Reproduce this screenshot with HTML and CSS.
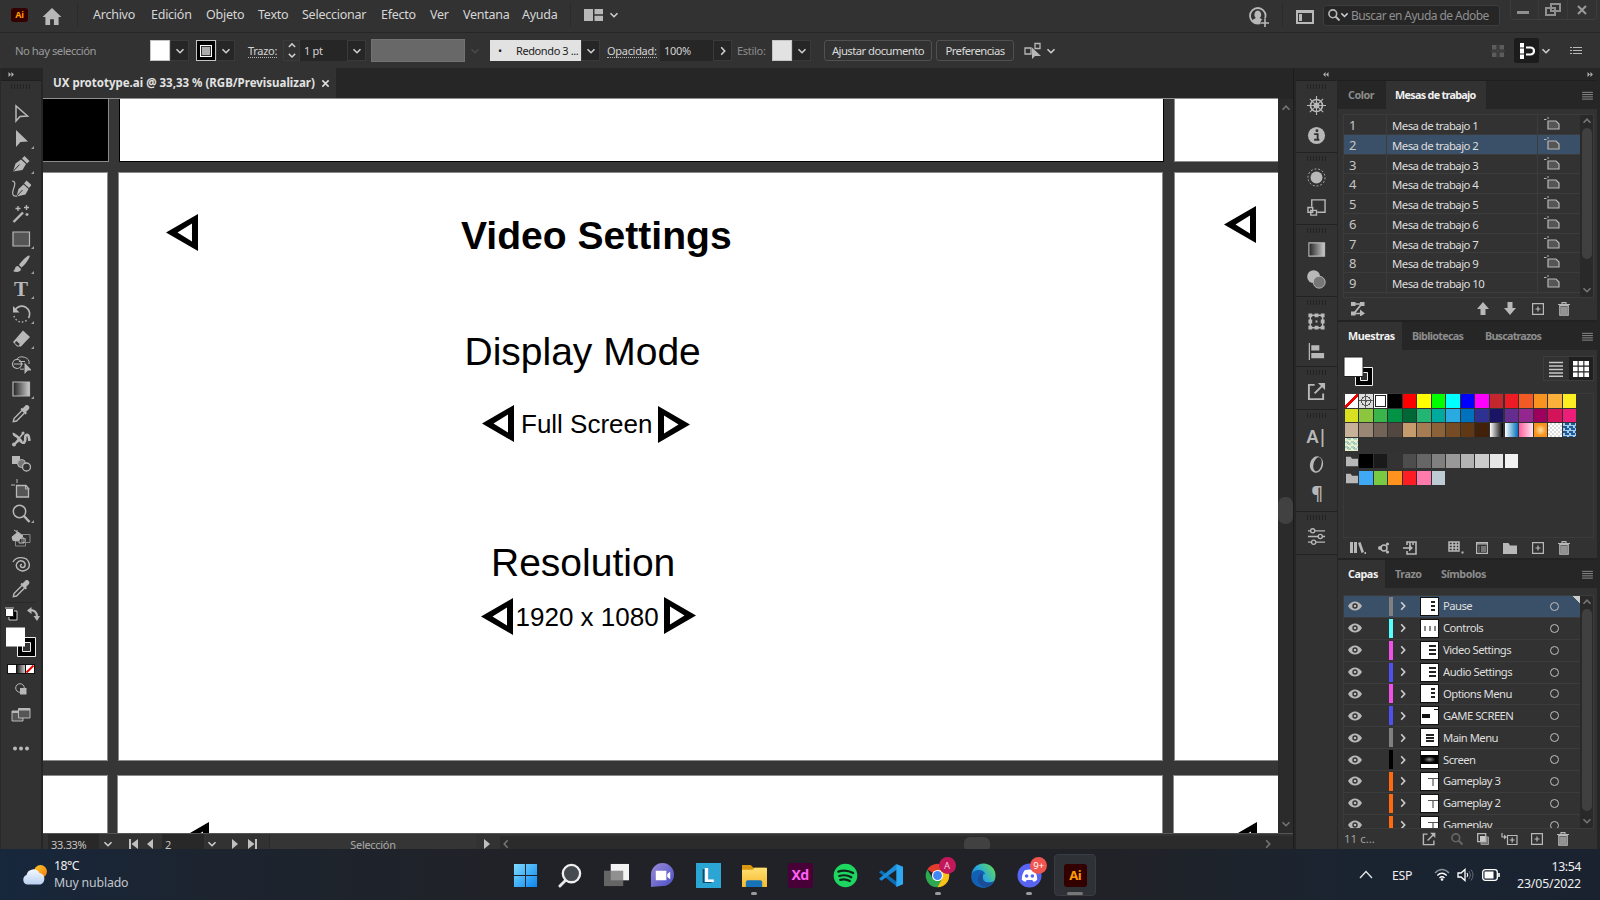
FILE: index.html
```html
<!DOCTYPE html>
<html lang="es">
<head>
<meta charset="utf-8">
<title>UX prototype.ai</title>
<link rel="stylesheet" href="styles.css">
</head>
<body>
<svg class="sprite" aria-hidden="true">
  <defs>
    <linearGradient id="g-gray"><stop offset="0" stop-color="#222"/><stop offset="1" stop-color="#ccc"/></linearGradient>
    <linearGradient id="g-win" x2="1" y2="1"><stop offset="0" stop-color="#7fdcff"/><stop offset="1" stop-color="#0a86f0"/></linearGradient>
    <linearGradient id="g-cloud" y2="1" x2="0"><stop offset="0" stop-color="#f4f8ff"/><stop offset="1" stop-color="#b9d0f0"/></linearGradient>
    <linearGradient id="g-sun" y2="1" x2="1"><stop offset="0" stop-color="#ffc928"/><stop offset="1" stop-color="#f07a10"/></linearGradient>
    <linearGradient id="g-chat" y2="1" x2="1"><stop offset="0" stop-color="#9b8bd8"/><stop offset="1" stop-color="#4a4fc4"/></linearGradient>
    <linearGradient id="g-fold" y2="1" x2="0"><stop offset="0" stop-color="#ffe072"/><stop offset="1" stop-color="#f5b92e"/></linearGradient>
    <linearGradient id="g-edge" x1="0" y1="0.9" x2="1" y2="0.2"><stop offset="0" stop-color="#0c59a4"/><stop offset="0.5" stop-color="#2aa8dc"/><stop offset="1" stop-color="#5fd95a"/></linearGradient>
  </defs>
  <symbol id="down" viewBox="0 0 10 10"><path d="M1.5 3.2 5 6.7 8.5 3.2" fill="none" stroke="currentColor" stroke-width="1.6"/></symbol>
  <symbol id="up" viewBox="0 0 10 10"><path d="M1.5 6.7 5 3.2 8.5 6.7" fill="none" stroke="currentColor" stroke-width="1.6"/></symbol>
  <symbol id="right" viewBox="0 0 10 10"><path d="M3.2 1.2 6.7 5 3.2 8.8" fill="none" stroke="currentColor" stroke-width="1.6"/></symbol>
  <symbol id="left" viewBox="0 0 10 10"><path d="M6.7 1.2 3.2 5 6.7 8.8" fill="none" stroke="currentColor" stroke-width="1.6"/></symbol>
  <symbol id="expand" viewBox="0 0 8 6"><path d="M1 0v6l3-3zM4.500 0v6l3-3z" fill="currentColor"/></symbol>
  <symbol id="collapse" viewBox="0 0 8 6"><path d="M3.500 0v6l-3-3zM7 0v6L4 3z" fill="currentColor"/></symbol>
  <symbol id="menu" viewBox="0 0 12 10"><path d="M0 1.500h12M0 4h12M0 6.500h12M0 9h12" stroke="currentColor" stroke-width="1.100"/></symbol>
  <symbol id="home" viewBox="0 0 20 18"><path d="M10 0 0 9.500h3V18h5v-6h4v6h5V9.500h3z" fill="currentColor"/></symbol>
  <symbol id="workspace" viewBox="0 0 19 12"><path d="M0 0h9v12H0zM10.500 0H19v5.300h-8.500zM10.500 6.700H19V12h-8.500z" fill="currentColor"/></symbol>
  <symbol id="user" viewBox="0 0 20 20"><circle cx="8.800" cy="8.800" r="7.800" fill="none" stroke="currentColor" stroke-width="1.800"/><path d="M8.800 3.500a3.600 4.200 0 0 1 2 7.600l3.500 2-1 2.400-4.500 1.500-4.500-1.500-1-2.400 3.500-2a3.600 4.200 0 0 1 2-7.600z" fill="currentColor"/><circle cx="16" cy="16" r="4.500" fill="#323232"/><path d="M16 12v8M12 16h8" stroke="currentColor" stroke-width="1.600"/></symbol>
  <symbol id="panel" viewBox="0 0 18 14"><path d="M1 1h16v12H1zM1 2h16" fill="none" stroke="currentColor" stroke-width="2"/><path d="M3 4h3v7H3z" fill="currentColor"/></symbol>
  <symbol id="search" viewBox="0 0 12 12"><circle cx="4.800" cy="4.800" r="3.900" fill="none" stroke="currentColor" stroke-width="1.600"/><path d="m7.500 7.500 4 4" stroke="currentColor" stroke-width="2"/></symbol>
  <symbol id="restore" viewBox="0 0 16 14"><path d="M6 1h9v7H6zM1 5h9v7H1z" fill="#323232" stroke="currentColor" stroke-width="2"/></symbol>
  <symbol id="selsim" viewBox="0 0 18 17"><path d="M1 6h6v6H1zM11 1.500h5v5h-5z" fill="none" stroke="currentColor" stroke-width="1.300"/><path d="M8 5.500V17l3-3h6z" fill="currentColor"/></symbol>
  <symbol id="gridsnap" viewBox="0 0 14 14"><path d="M1 1h4.500v4.500H1zM8.500 1H13v4.500H8.500zM1 8.500h4.500V13H1zM8.500 8.500H13V13H8.500z" fill="currentColor"/><path d="M7 0v14M0 7h14" stroke="currentColor" stroke-width=".5"/></symbol>
  <symbol id="magnet" viewBox="0 0 16 16"><path d="M1 0h4v4.500H1zM1 5.500h4v5H1zM1 11.500h4V16H1z" fill="#fff"/><path d="M7 4.500h4.500a3.300 3.300 0 0 1 0 7H7" fill="none" stroke="#fff" stroke-width="2.200"/></symbol>
  <symbol id="listico" viewBox="0 0 12 9"><path d="M3 1.500h9M3 4.500h9M3 7.500h9M0 1.500h2M0 4.500h2M0 7.500h2" stroke="currentColor" stroke-width="1.200"/></symbol>

  <symbol id="t-sel" viewBox="0 0 20 20"><path d="M5 2v15l4-4.600 7.500-.4z" fill="none" stroke="currentColor" stroke-width="1.500"/></symbol>
  <symbol id="t-dsel" viewBox="0 0 20 20"><path d="M5 1v17l4.500-5 7.500-.5z" fill="currentColor"/></symbol>
  <symbol id="t-pen" viewBox="0 0 20 20"><path d="m2 17.500 2.500-8 5.500-4 5 4.500-3.500 6z" fill="currentColor"/><path d="m2 17.500 6.500-7" stroke="#323232"/><path d="m11 4.500 2.500-2.500 5 5L16 9.500z" fill="currentColor"/></symbol>
  <symbol id="t-curv" viewBox="0 0 20 20"><path d="m5.500 17.500 2-7.500 5-4.500 5 4.500-3 5.500z" fill="currentColor"/><path d="m5.500 17.500 6-6.500" stroke="#323232"/><path d="m13 4.500 2.500-3 5 4.500-2.500 3z" fill="currentColor"/><path d="M1 2c4 0 3 4 1.500 8S1 18 6 17" fill="none" stroke="currentColor" stroke-width="1.200"/></symbol>
  <symbol id="t-wand" viewBox="0 0 20 20"><path d="m2.500 18 9.500-9.500" stroke="currentColor" stroke-width="2.400"/><path d="M7 2v5M4.500 4.500h5M15.500 1v5M13 3.500h5M16 9v3M14.500 10.500h3" stroke="currentColor" stroke-width="1.300"/></symbol>
  <symbol id="t-rect" viewBox="0 0 20 20"><path d="M2 3h16.500v14H2z" fill="#555" stroke="currentColor" stroke-width="1.200"/></symbol>
  <symbol id="t-brush" viewBox="0 0 20 20"><path d="M18.500 1.500C16 1 9 9 8 11l2.500 2.500C13 12 20 3 18.500 1.500zM7 12c-4 0-2 4-5 5 3 2 8 1 8-2z" fill="currentColor"/></symbol>
  <symbol id="t-rot" viewBox="0 0 20 20"><path d="M4 6a7.500 7.500 0 1 1 13.500 8" fill="none" stroke="currentColor" stroke-width="1.600"/><path d="M3 12a8 8 0 0 0 14 3" fill="none" stroke="currentColor" stroke-width="1.400" stroke-dasharray="1.500 2"/><path d="M2 2v6.500h6.500z" fill="currentColor"/></symbol>
  <symbol id="t-erase" viewBox="0 0 20 20"><path d="m12 1.500 7 6.500-9 9.500H6L2 13z" fill="currentColor"/><path d="m4.500 13 3.500 3" stroke="#323232" stroke-width="2.500"/></symbol>
  <symbol id="t-shape" viewBox="0 0 20 20"><circle cx="6" cy="10" r="4.500" fill="none" stroke="currentColor" stroke-width="1.200"/><path d="M5 6a7 6 0 0 1 13 4M9 15a7 6 0 0 0 4 0M3 10h9M8 7.500h6" fill="none" stroke="currentColor"/><path d="M13.500 8.500V20l3.300-3.500h4z" fill="currentColor"/></symbol>
  <symbol id="t-grad" viewBox="0 0 20 20"><path d="M2 3h16.500v14H2z" fill="url(#g-gray)" stroke="currentColor" stroke-width="1.200"/></symbol>
  <symbol id="t-drop" viewBox="0 0 20 20"><path d="m11 6.500-8 8-.7 3.200 3.200-.7 8-8" fill="none" stroke="currentColor" stroke-width="1.400"/><path d="m9.500 5.500 5 5 1.500-1.500-1-1 3-3c1.500-2-1.500-5-3.500-3.500l-3 3-.8-.8z" fill="currentColor"/></symbol>
  <symbol id="t-puppet" viewBox="0 0 20 20"><path d="M3 4c-1 3 3 2 5 6s5 5 6 2-1-5 1.500-6 2.500 3 3 6" fill="none" stroke="currentColor" stroke-width="2.600"/><path d="m3 15.500 9-11M8 11c-2 3-4 4-6 4M5 6l6 6" fill="none" stroke="currentColor" stroke-width="1.600"/><circle cx="3" cy="15.500" r="2" fill="currentColor"/><circle cx="12" cy="4" r="1.500" fill="currentColor"/></symbol>
  <symbol id="t-blend" viewBox="0 0 20 20"><path d="M1 2h8v8H1z" fill="currentColor"/><circle cx="10.500" cy="9.500" r="4" fill="#777" stroke="currentColor"/><circle cx="15.500" cy="13" r="4" fill="#323232" stroke="currentColor" stroke-width="1.300"/></symbol>
  <symbol id="t-board" viewBox="0 0 20 20"><path d="M5.500 6.500H15l2.500 3V18h-12z" fill="#555" stroke="currentColor" stroke-width="1.300"/><path d="M14.500 6v4h4M6 0v4M0 6h4" stroke="currentColor" fill="none"/></symbol>
  <symbol id="t-zoom" viewBox="0 0 20 20"><circle cx="8.500" cy="7.500" r="6.200" fill="none" stroke="currentColor" stroke-width="1.500"/><path d="m13 12 5.500 6" stroke="currentColor" stroke-width="2.400"/></symbol>
  <symbol id="t-live" viewBox="0 0 20 20"><path d="M11 5.500h8v8h-8zM4.500 9.500h10v7.500h-10z" fill="none" stroke="#888"/><path d="M8 9h5v5H8z" fill="none" stroke="currentColor"/><path d="M1 8 7 3l5 4-5 5-5-.5zM3 1l3 2M6 1v3" fill="currentColor" stroke="currentColor"/></symbol>
  <symbol id="t-spiral" viewBox="0 0 20 20"><path d="M2 8c3-6 14-6 16 1s-7 10-11 6 0-9 4-8 4 6 1 6.500-3.500-3-1-3" fill="none" stroke="currentColor" stroke-width="1.400"/></symbol>
  <symbol id="trash" viewBox="0 0 12 14"><path d="M1.800 3.500h8.400v9.700H1.800z" fill="#666" stroke="currentColor" stroke-width="1.200"/><path d="M0 2.500h12M4 2V.6h4V2M4 5v7M6 5v7M8 5v7" fill="none" stroke="currentColor" stroke-width="1.100"/></symbol>
  <symbol id="plus" viewBox="0 0 12 12"><path d="M.6.600h10.800v10.800H.600zM6 3.500v5M3.500 6h5" fill="none" stroke="currentColor" stroke-width="1.200"/></symbol>
  <symbol id="board" viewBox="0 0 16 13"><path d="M4 4h8l3 3v5H4z" fill="#555" stroke="currentColor" stroke-width="1.200"/><path d="M4 0v2M0 2.500h2.500" stroke="currentColor"/></symbol>
  <symbol id="arrup" viewBox="0 0 12 13"><path d="M6 0 0 7h3.500v6h5V7H12z" fill="currentColor"/></symbol>
  <symbol id="arrdn" viewBox="0 0 12 13"><path d="M6 13 0 6h3.500V0h5v6H12z" fill="currentColor"/></symbol>
  <symbol id="reorder" viewBox="0 0 14 14"><path d="M0 0h4.500v4H0zM9 0h4.500v4H9zM0 9.500h4.500v4H0zM9 7.500l5 4-5 3z" fill="currentColor"/><path d="M3 2h7.500L3 11.500h8" fill="none" stroke="currentColor" stroke-width="1.700"/></symbol>
  <symbol id="folder" viewBox="0 0 14 12"><path d="M0 1h5.500L7 3.500h7V12H0z" fill="currentColor"/></symbol>
  <symbol id="export" viewBox="0 0 20 20"><path d="M8 3H2v15h15v-6" fill="none" stroke="currentColor" stroke-width="2"/><path d="m8 12 8.500-8.500" stroke="currentColor" stroke-width="2"/><path d="M11.500 1H19v7.500z" fill="currentColor"/></symbol>
  <symbol id="eye" viewBox="0 0 14 10"><path d="M0 5c3.500-6 10.500-6 14 0-3.500 6-10.500 6-14 0z" fill="currentColor"/><circle cx="7" cy="5" r="2.700" fill="#323232"/><circle cx="7" cy="5" r="1.300" fill="currentColor"/></symbol>
  <symbol id="tri" viewBox="0 0 32 37"><path fill-rule="evenodd" d="M0 18.500 32 0v37zM11.500 18.500 26 9.500v18z" fill="#000"/></symbol>

  <symbol id="d-wheel" viewBox="0 0 20 20"><g fill="none" stroke="currentColor"><circle cx="10" cy="10" r="6.300" stroke-width="1.800"/><circle cx="10" cy="10" r="2.400" stroke-width="1.300"/><path d="M10 0v20M0 10h20M3 3l14 14M17 3 3 17" stroke-width="1.200"/></g></symbol>
  <symbol id="d-info" viewBox="0 0 20 20"><circle cx="10" cy="10" r="9" fill="currentColor"/><path d="M7.500 8.500h3.700V14M7.500 14.500H13" fill="none" stroke="#323232" stroke-width="2"/><circle cx="10.500" cy="5" r="1.500" fill="#323232"/></symbol>
  <symbol id="d-sun" viewBox="0 0 20 20"><circle cx="10" cy="10" r="6.300" fill="currentColor"/><circle cx="10" cy="10" r="9" fill="none" stroke="currentColor" stroke-dasharray="2 2"/></symbol>
  <symbol id="d-asset" viewBox="0 0 20 20"><path d="M5 9V2h14v13h-8M1 10h5v5H1zM4 13h6v5H4z" fill="none" stroke="currentColor" stroke-width="1.500"/></symbol>
  <symbol id="d-trans" viewBox="0 0 20 20"><circle cx="7" cy="7" r="6.800" fill="currentColor"/><circle cx="12.800" cy="12.800" r="6.300" fill="#777" stroke="currentColor"/></symbol>
  <symbol id="d-box" viewBox="0 0 20 20"><path d="M3.500 3.500h13v13h-13z" fill="none" stroke="currentColor" stroke-width="1.500"/><path d="M1.500 1.500h4v4h-4zM8 1.500h4v4H8zM14.500 1.500h4v4h-4zM1.500 8h4v4h-4zM14.500 8h4v4h-4zM1.500 14.500h4v4h-4zM8 14.500h4v4H8zM14.500 14.500h4v4h-4zM9 9h2v2H9z" fill="currentColor"/></symbol>
  <symbol id="d-align" viewBox="0 0 20 20"><path d="M2.500 1v18" stroke="currentColor" stroke-width="1.300"/><path d="M4.500 3.500H13V9H4.500zM4.500 11.500H18V17H4.500z" fill="currentColor"/></symbol>
  <symbol id="d-o" viewBox="0 0 20 20"><ellipse cx="10" cy="10" rx="6.800" ry="8.800" fill="currentColor" transform="rotate(15 10 10)"/><ellipse cx="11" cy="9.800" rx="4.200" ry="7.600" fill="#323232" transform="rotate(15 11 10)"/></symbol>
  <symbol id="d-slide" viewBox="0 0 20 20"><path d="M1 4h18M1 10h18M1 16h18" stroke="currentColor" stroke-width="1.400"/><g fill="#323232" stroke="currentColor" stroke-width="1.400"><circle cx="6" cy="4" r="2.200"/><circle cx="14" cy="10" r="2.200"/><circle cx="7" cy="16" r="2.200"/></g></symbol>
</svg>

<div class="app">
  <header class="menubar">
    <span class="logo">Ai</span>
    <svg class="home"><use href="#home"/></svg>
    <i class="rule"></i>
    <span>Archivo</span><span>Edición</span><span>Objeto</span><span>Texto</span><span>Seleccionar</span><span>Efecto</span><span>Ver</span><span>Ventana</span><span>Ayuda</span>
    <i class="rule"></i>
    <svg class="ws"><use href="#workspace"/></svg>
    <svg class="chev"><use href="#down"/></svg>
    <svg class="s20"><use href="#user"/></svg>
    <i class="rule"></i>
    <svg class="pnl"><use href="#panel"/></svg>
    <div class="search"><svg class="s12"><use href="#search"/></svg><svg class="chev"><use href="#down"/></svg><span>Buscar en Ayuda de Adobe</span></div>
    <div class="winbtns"><b class="min"></b><b><svg class="rst"><use href="#restore"/></svg></b><b><svg viewBox="0 0 10 10" class="s10"><path d="m1 1 8 8M9 1 1 9" stroke="#9a9a9a" stroke-width="2"/></svg></b></div>
  </header>

  <div class="controlbar">
    <span class="nosel">No hay selección</span>
    <div class="combo"><i class="sw white"></i><b><svg class="chev"><use href="#down"/></svg></b></div>
    <div class="combo"><i class="sw strokesw"></i><b><svg class="chev"><use href="#down"/></svg></b></div>
    <span class="dotted trazo">Trazo:</span>
    <div class="combo field"><b class="step"><svg class="chev"><use href="#up"/></svg><svg class="chev"><use href="#down"/></svg></b><span class="pt">1 pt</span><b><svg class="chev"><use href="#down"/></svg></b></div>
    <div class="combo off"><i></i><svg class="chev"><use href="#down"/></svg></div>
    <div class="combo brushsel"><span><em>•</em>Redondo 3 ...</span><b><svg class="chev"><use href="#down"/></svg></b></div>
    <span class="dotted opac">Opacidad:</span>
    <div class="combo field"><span class="pct">100%</span><b><svg class="chev"><use href="#right"/></svg></b></div>
    <span class="dim">Estilo:</span>
    <div class="combo"><i class="sw style"></i><b><svg class="chev"><use href="#down"/></svg></b></div>
    <span class="btn b1">Ajustar documento</span>
    <span class="btn b2">Preferencias</span>
    <svg class="selsim"><use href="#selsim"/></svg>
    <svg class="chev"><use href="#down"/></svg>
    <svg class="gs"><use href="#gridsnap"/></svg>
    <span class="magnet"><svg class="s16"><use href="#magnet"/></svg></span>
    <svg class="chev"><use href="#down"/></svg>
    <svg class="li"><use href="#listico"/></svg>
  </div>

  <main class="work">
    <aside class="tools">
      <div class="strip"><svg class="dbl"><use href="#expand"/></svg></div>
      <i class="grip"></i>
      <div class="toollist">
        <span><svg><use href="#t-sel"/></svg></span>
        <span class="more"><svg><use href="#t-dsel"/></svg></span>
        <span class="more"><svg><use href="#t-pen"/></svg></span>
        <span><svg><use href="#t-curv"/></svg></span>
        <span><svg><use href="#t-wand"/></svg></span>
        <span class="more"><svg><use href="#t-rect"/></svg></span>
        <span class="more"><svg><use href="#t-brush"/></svg></span>
        <span class="more type">T</span>
        <span class="more"><svg><use href="#t-rot"/></svg></span>
        <span class="more"><svg><use href="#t-erase"/></svg></span>
        <span><svg><use href="#t-shape"/></svg></span>
        <span class="more"><svg><use href="#t-grad"/></svg></span>
        <span><svg><use href="#t-drop"/></svg></span>
        <span><svg><use href="#t-puppet"/></svg></span>
        <span><svg><use href="#t-blend"/></svg></span>
        <span><svg><use href="#t-board"/></svg></span>
        <span class="more"><svg><use href="#t-zoom"/></svg></span>
        <span><svg><use href="#t-live"/></svg></span>
        <span><svg><use href="#t-spiral"/></svg></span>
        <span><svg><use href="#t-drop"/></svg></span>
      </div>
      <svg class="toolend" viewBox="0 0 42 160">
        <path d="M5 1.500h31" stroke="#292929"/>
        <path d="M9 10h8v9H9z" fill="#000" stroke="#ccc"/><path d="M5.500 7.500h8v8h-8z" fill="#fff" stroke="#222"/><path d="M5 7h9" stroke="#ccc"/>
        <path d="M30 9q7 0 7 7" fill="none" stroke="#b8b8b8" stroke-width="2"/><path d="M27 9.500 31.500 6v7zM33.500 15h6.500L37 20z" fill="#b8b8b8"/>
        <path d="M17.500 36.500h18v19h-18z" fill="#000" stroke="#eee"/><path d="M22.500 41.500h8v9h-8z" fill="#323232" stroke="#eee"/>
        <path d="M6 26.500h19v19H6z" fill="#fff"/>
        <path d="M7 63h28v10H7z" fill="#111"/><path d="M8 64h8v8H8z" fill="#fff"/><path d="M17 64h8v8h-8z" fill="url(#g-gray)"/><path d="M26 64h8v8h-8z" fill="#fff"/><path d="m26.500 71.500 7-7" stroke="#e00" stroke-width="2"/>
        <circle cx="20" cy="87" r="4.300" fill="none" stroke="#b8b8b8"/><path d="M20 87h6.500v6.500H20z" fill="#b8b8b8"/>
        <path d="M12 110h11v10H12z" fill="#555" stroke="#b8b8b8"/><path d="M18.500 107.500h11.500v9.500H18.500z" fill="#555" stroke="#b8b8b8"/><path d="M12 111h6M18 108.500h12" stroke="#b8b8b8" stroke-width="2"/>
        <g fill="#b8b8b8"><circle cx="15" cy="147.500" r="2"/><circle cx="21" cy="147.500" r="2"/><circle cx="27" cy="147.500" r="2"/></g>
      </svg>
    </aside>

    <section class="doc">
      <div class="tabs"><div class="tab"><span>UX prototype.ai @ 33,33 % (RGB/Previsualizar)</span><svg viewBox="0 0 10 10" class="tabx"><path d="m1.500 1.500 7 7M8.500 1.500l-7 7" stroke="#e0e0e0" stroke-width="1.700"/></svg></div></div>
      <div class="view">
        <div class="canvas">
          <div class="ab blk"></div><div class="ab top"></div><div class="ab topr"></div>
          <div class="ab midl"></div><div class="ab main"></div><div class="ab midr"></div>
          <div class="ab botl"></div><div class="ab bot"></div><div class="ab botr"></div>
          <svg class="tri p1"><use href="#tri"/></svg>
          <svg class="tri p2"><use href="#tri"/></svg>
          <svg class="tri p3"><use href="#tri"/></svg>
          <svg class="tri p4 flip"><use href="#tri"/></svg>
          <svg class="tri p5"><use href="#tri"/></svg>
          <svg class="tri p6 flip"><use href="#tri"/></svg>
          <svg class="tri p7"><use href="#tri"/></svg>
          <svg class="tri p8"><use href="#tri"/></svg>
          <span class="art a1">Video Settings</span>
          <span class="art a2">Display Mode</span>
          <span class="art a3">Full Screen</span>
          <span class="art a4">Resolution</span>
          <span class="art a5">1920 x 1080</span>
        </div>
        <div class="vscroll"><svg class="chev"><use href="#up"/></svg><i></i><svg class="chev"><use href="#down"/></svg></div>
      </div>
      <div class="status">
        <span class="dark zoomf">33.33%</span>
        <svg class="chev"><use href="#down"/></svg>
        <svg viewBox="0 0 10 10" class="s10"><path d="M1 0h2v10H1zM10 0v10L3.500 5z" fill="#c0c0c0"/></svg>
        <svg viewBox="0 0 10 10" class="s10"><path d="M8 0v10L2 5z" fill="#c0c0c0"/></svg>
        <span class="dark pagef">2</span>
        <svg class="chev"><use href="#down"/></svg>
        <svg viewBox="0 0 10 10" class="s10"><path d="M2 0v10l6-5z" fill="#c0c0c0"/></svg>
        <svg viewBox="0 0 10 10" class="s10"><path d="M7 0h2v10H7zM0 0v10l6.500-5z" fill="#c0c0c0"/></svg>
        <span class="mode">Selección</span>
        <svg viewBox="0 0 10 10" class="s10"><path d="M2 0v10l6-5z" fill="#c0c0c0"/></svg>
        <div class="hscroll"><svg class="chev"><use href="#left"/></svg><i></i><svg class="chev"><use href="#right"/></svg></div>
      </div>
    </section>

    <aside class="dock">
      <div class="strip"><svg class="dbl"><use href="#collapse"/></svg></div>
      <div class="dg g2"><i class="grip"></i><svg><use href="#d-wheel"/></svg><svg><use href="#d-info"/></svg></div>
      <div class="dg g2"><i class="grip"></i><svg><use href="#d-sun"/></svg><svg><use href="#d-asset"/></svg></div>
      <div class="dg g2"><i class="grip"></i><svg><use href="#t-grad"/></svg><svg><use href="#d-trans"/></svg></div>
      <div class="dg g2b"><i class="grip"></i><svg><use href="#d-box"/></svg><svg><use href="#d-align"/></svg></div>
      <div class="dg g1"><i class="grip"></i><svg><use href="#export"/></svg></div>
      <div class="dg g3"><i class="grip"></i><span class="glyph">A|</span><svg><use href="#d-o"/></svg><span class="glyph pil">¶</span></div>
      <div class="dg g1"><i class="grip"></i><svg><use href="#d-slide"/></svg></div>
    </aside>

    <aside class="panels">
      <div class="strip"><svg class="dbl"><use href="#expand"/></svg></div>
      <section class="panel pa">
        <div class="ptabs"><span class="c1">Color</span><span class="on c2">Mesas de trabajo</span><svg><use href="#menu"/></svg></div>
        <div class="listbox">
          <div class="rows">
            <div class="r"><span>1</span><span>Mesa de trabajo 1</span><svg><use href="#board"/></svg></div>
            <div class="r sel"><span>2</span><span>Mesa de trabajo 2</span><svg><use href="#board"/></svg></div>
            <div class="r"><span>3</span><span>Mesa de trabajo 3</span><svg><use href="#board"/></svg></div>
            <div class="r"><span>4</span><span>Mesa de trabajo 4</span><svg><use href="#board"/></svg></div>
            <div class="r"><span>5</span><span>Mesa de trabajo 5</span><svg><use href="#board"/></svg></div>
            <div class="r"><span>6</span><span>Mesa de trabajo 6</span><svg><use href="#board"/></svg></div>
            <div class="r"><span>7</span><span>Mesa de trabajo 7</span><svg><use href="#board"/></svg></div>
            <div class="r"><span>8</span><span>Mesa de trabajo 9</span><svg><use href="#board"/></svg></div>
            <div class="r"><span>9</span><span>Mesa de trabajo 10</span><svg><use href="#board"/></svg></div>
          </div>
          <div class="pscroll"><svg class="chev"><use href="#up"/></svg><i></i><svg class="chev"><use href="#down"/></svg></div>
        </div>
        <div class="pfoot f1"><svg class="s14"><use href="#reorder"/></svg><svg class="arr"><use href="#arrup"/></svg><svg class="arr"><use href="#arrdn"/></svg><svg class="s12"><use href="#plus"/></svg><svg class="tr"><use href="#trash"/></svg></div>
      </section>

      <section class="panel pb">
        <div class="ptabs"><span class="on m1">Muestras</span><span class="m2">Bibliotecas</span><span class="m3">Buscatrazos</span><svg><use href="#menu"/></svg></div>
        <div class="swtop">
          <svg viewBox="0 0 32 32" class="fs"><path d="M12.500 11.500h17v18h-17z" fill="#000" stroke="#eee"/><path d="M17.500 16.500h7v8h-7z" fill="#323232" stroke="#eee"/><path d="M1 1h19v19.500H1z" fill="#fff" stroke="#222"/></svg>
          <div class="viewtog"><b><svg viewBox="0 0 14 16"><path d="M0 1.500h14M0 5h14M0 8.500h14M0 12h14M0 15.300h14" stroke="#c8c8c8" stroke-width="1.500"/></svg></b><b class="act"><svg viewBox="0 0 16 16"><path d="M0 0h4.600v4.600H0zM5.700 0h4.600v4.600H5.700zM11.400 0H16v4.600h-4.600zM0 5.700h4.600v4.600H0zM5.700 5.700h4.600v4.600H5.700zM11.400 5.700H16v4.600h-4.600zM0 11.400h4.600V16H0zM5.700 11.400h4.600V16H5.700zM11.400 11.400H16V16h-4.600z" fill="#fff"/></svg></b></div>
        </div>
        <div class="swbox">
          <div class="swgrid">
            <i class="none"></i><i class="reg"></i><i class="cur"></i><i style="background:#000"></i><i style="background:#f00"></i><i style="background:#ff0"></i><i style="background:#0f0"></i><i style="background:#0ff"></i><i style="background:#00f"></i><i style="background:#f0f"></i><i style="background:#c1272d"></i><i style="background:#ed1c24"></i><i style="background:#f15a24"></i><i style="background:#f7931e"></i><i style="background:#fbb03b"></i><i style="background:#fcee21"></i>
            <i style="background:#d9e021"></i><i style="background:#8cc63f"></i><i style="background:#39b54a"></i><i style="background:#009245"></i><i style="background:#006837"></i><i style="background:#22b573"></i><i style="background:#00a99d"></i><i style="background:#29abe2"></i><i style="background:#0071bc"></i><i style="background:#2e3192"></i><i style="background:#1b1464"></i><i style="background:#662d91"></i><i style="background:#93278f"></i><i style="background:#9e005d"></i><i style="background:#d4145a"></i><i style="background:#ed1e79"></i>
            <i style="background:#c7b299"></i><i style="background:#998675"></i><i style="background:#736357"></i><i style="background:#534741"></i><i style="background:#c69c6d"></i><i style="background:#a67c52"></i><i style="background:#8c6239"></i><i style="background:#754c24"></i><i style="background:#603813"></i><i style="background:#42210b"></i><i class="gr1"></i><i class="gr2"></i><i class="gr3"></i><i class="gr4"></i><i class="pt1"></i><i class="pt2"></i>
            <i class="pt3"></i>
          </div>
          <div class="swgrid grays">
            <svg><use href="#folder"/></svg><i style="background:#000"></i><i style="background:#1a1a1a"></i><i style="background:#333"></i><i style="background:#4d4d4d"></i><i style="background:#666"></i><i style="background:#808080"></i><i style="background:#999"></i><i style="background:#b3b3b3"></i><i style="background:#ccc"></i><i style="background:#e6e6e6"></i><i style="background:#f2f2f2"></i>
          </div>
          <div class="swgrid hues">
            <svg><use href="#folder"/></svg><i style="background:#3fa9f5"></i><i style="background:#7ac943"></i><i style="background:#ff931e"></i><i style="background:#ff1d25"></i><i style="background:#ff7bac"></i><i style="background:#bdccd4"></i>
          </div>
        </div>
        <div class="pfoot f2">
          <svg viewBox="0 0 16 13" class="w16"><path d="M0 1h3v11H0zM4 1h3v11H4zM8 2l2.500-1 3.500 10-2.500 1z" fill="#b8b8b8"/><path d="M14.500 11h1.500v2h-1.500z" fill="#b8b8b8"/></svg>
          <svg viewBox="0 0 12 12" class="s12"><circle cx="6" cy="6" r="3" fill="none" stroke="#b8b8b8" stroke-width="1.600"/><circle cx="9.500" cy="2" r="1.600" fill="#b8b8b8"/><circle cx="9.500" cy="10" r="1.600" fill="#b8b8b8"/><circle cx="2" cy="6" r="2" fill="#b8b8b8"/></svg>
          <svg viewBox="0 0 14 14" class="s14"><path d="M4 4V1h9v12H4v-3M7 1v4M10 1v3" fill="none" stroke="#b8b8b8" stroke-width="1.600"/><path d="M0 7h7" stroke="#b8b8b8" stroke-width="1.600"/><path d="m6 3.500 4 3.500-4 3.500z" fill="#b8b8b8"/></svg>
          <svg viewBox="0 0 16 13" class="w16"><path d="M1 1h10v9H1zM1 4h10M1 7h10M4.500 1v9M8 1v9" fill="none" stroke="#b8b8b8" stroke-width="1.500"/><path d="M13.500 10.500h2v2h-2z" fill="#b8b8b8"/></svg>
          <svg viewBox="0 0 12 12" class="s12"><path d="M.6.600h10.800v10.800H.600zM.6 2h10.800M2.500 5h1M5 5h5M2.500 7h1M5 7h5M2.500 9h1M5 9h5" fill="none" stroke="#b8b8b8" stroke-width="1.200"/></svg>
          <svg class="s14"><use href="#folder"/></svg><svg class="s12"><use href="#plus"/></svg><svg class="tr"><use href="#trash"/></svg>
        </div>
      </section>

      <section class="panel pc">
        <div class="ptabs"><span class="on l1">Capas</span><span class="l2">Trazo</span><span class="l3">Símbolos</span><svg><use href="#menu"/></svg></div>
        <div class="listbox layers">
          <div class="rows">
            <div class="ly sel"><svg class="eye"><use href="#eye"/></svg><i class="gray"></i><svg class="chev"><use href="#right"/></svg><b class="th v1"></b><span>Pause</span><u></u></div>
            <div class="ly"><svg class="eye"><use href="#eye"/></svg><i class="cyan"></i><svg class="chev"><use href="#right"/></svg><b class="th v2"></b><span>Controls</span><u></u></div>
            <div class="ly"><svg class="eye"><use href="#eye"/></svg><i class="mag"></i><svg class="chev"><use href="#right"/></svg><b class="th v3"></b><span>Video Settings</span><u></u></div>
            <div class="ly"><svg class="eye"><use href="#eye"/></svg><i class="blue"></i><svg class="chev"><use href="#right"/></svg><b class="th v3"></b><span>Audio Settings</span><u></u></div>
            <div class="ly"><svg class="eye"><use href="#eye"/></svg><i class="mag"></i><svg class="chev"><use href="#right"/></svg><b class="th v1"></b><span>Options Menu</span><u></u></div>
            <div class="ly"><svg class="eye"><use href="#eye"/></svg><i class="blue"></i><svg class="chev"><use href="#right"/></svg><b class="th v4"></b><span>GAME SCREEN</span><u></u></div>
            <div class="ly"><svg class="eye"><use href="#eye"/></svg><i class="gray"></i><svg class="chev"><use href="#right"/></svg><b class="th v5"></b><span>Main Menu</span><u></u></div>
            <div class="ly"><svg class="eye"><use href="#eye"/></svg><i class="black"></i><svg class="chev"><use href="#right"/></svg><b class="th v6"></b><span>Screen</span><u></u></div>
            <div class="ly"><svg class="eye"><use href="#eye"/></svg><i class="org"></i><svg class="chev"><use href="#right"/></svg><b class="th v7"></b><span>Gameplay 3</span><u></u></div>
            <div class="ly"><svg class="eye"><use href="#eye"/></svg><i class="org"></i><svg class="chev"><use href="#right"/></svg><b class="th v7"></b><span>Gameplay 2</span><u></u></div>
            <div class="ly"><svg class="eye"><use href="#eye"/></svg><i class="org"></i><svg class="chev"><use href="#right"/></svg><b class="th v7"></b><span>Gameplay</span><u></u></div>
          </div>
          <div class="pscroll"><svg class="chev"><use href="#up"/></svg><i></i><svg class="chev"><use href="#down"/></svg></div>
        </div>
        <div class="pfoot f3"><span>11 c...</span><svg class="s14"><use href="#export"/></svg><svg class="s12 faded"><use href="#search"/></svg>
          <svg viewBox="0 0 12 12" class="s12"><path d="M4 4h7.500v7.500H4z" fill="#777" stroke="#999"/><path d="M.7.700h8v8h-8z" fill="none" stroke="#b8b8b8" stroke-width="1.300"/><path d="M3 3h5v5H3z" fill="#c8c8c8"/></svg>
          <svg viewBox="0 0 17 12" class="w17"><path d="M6.500 2.500h9.500v9H6.500zM11.200 4.500v5M8.700 7h5M1 0v4h3" fill="none" stroke="#b8b8b8" stroke-width="1.200"/><path d="m3 1.500 3 2.500-3 2.500z" fill="#b8b8b8"/></svg>
          <svg class="s12"><use href="#plus"/></svg><svg class="tr"><use href="#trash"/></svg></div>
      </section>
    </aside>
  </main>

  <footer class="taskbar">
    <svg class="weather" viewBox="0 0 26 20"><circle cx="18.500" cy="6.500" r="6.500" fill="url(#g-sun)"/><path d="M5 19.500a5 5 0 0 1-.5-9.500A7 7 0 0 1 17.500 8a6 6 0 0 1 1 11.500z" fill="url(#g-cloud)"/></svg>
    <div class="wtext"><span class="deg">18°C</span><span>Muy nublado</span></div>
    <div class="apps">
      <span class="app-i"><svg viewBox="0 0 26 26"><path d="M1 1h11.500v11.500H1zM13.500 1H25v11.500H13.500zM1 13.500h11.500V25H1zM13.500 13.500H25V25H13.500z" fill="url(#g-win)"/></svg></span>
      <span class="app-i"><svg viewBox="0 0 26 26"><path d="m8 18-6 6" stroke="#e8e8e8" stroke-width="3" stroke-linecap="round"/><circle cx="14" cy="11" r="9" fill="#454a50" stroke="#f0f0f0" stroke-width="2.400"/></svg></span>
      <span class="app-i"><svg viewBox="0 0 26 26"><path d="M7 1h19v17H7z" fill="#f3f3f3"/><path d="M0 8h20v16H0z" fill="#777" fill-opacity=".8"/></svg></span>
      <span class="app-i"><svg viewBox="0 0 26 26"><path d="M1 25V12A12 12 0 1 1 13 24z" fill="url(#g-chat)"/><path d="M6 8h11v10H6zM18 11.500 21 9v8l-3-2.500z" fill="#fff"/></svg></span>
      <span class="app-i"><b class="tile lt">L</b></span>
      <span class="app-i run"><svg viewBox="0 0 26 26"><path d="M0 2h9l3 3h12v5H0z" fill="#d9960f"/><path d="M0 7h11l2-2h13v20H0z" fill="url(#g-fold)"/><path d="M4 25v-5q0-2 2-2h13q2 0 2 2v5z" fill="#1673b8"/></svg></span>
      <span class="app-i"><b class="tile xd">Xd</b></span>
      <span class="app-i"><svg viewBox="0 0 26 26"><circle cx="13" cy="13" r="12.300" fill="#1ed760"/><path d="M5.500 9q8-2.500 15.500 1.500M6.500 13.500q7-2 12.500 1.300M7.500 17.500q5.500-1.500 10 1.200" fill="none" stroke="#10251a" stroke-width="2.300" stroke-linecap="round"/></svg></span>
      <span class="app-i"><svg viewBox="0 0 26 26"><path d="M0 9.500 2.500 7.500 19 20v5z" fill="#0a6fb8"/><path d="M18 1 0 16.500l2.500 2L19 6.500z" fill="#1b8edb"/><path d="m18 1 7 3v18l-7 3z" fill="#2ea8f0"/></svg></span>
      <span class="app-i run"><svg viewBox="0 0 26 26"><path d="M13 13 2.400 6.800A12.300 12.300 0 0 1 23.700 7H13z" fill="#e33b2e"/><path d="M13 13V7h10.700A12.300 12.300 0 0 1 13 25.300z" fill="#fbc116"/><path d="M2.400 6.800A12.300 12.300 0 0 0 13 25.300l5-9.300-10 0z" fill="#2da94f"/><circle cx="13" cy="13" r="5.800" fill="#fff"/><circle cx="13" cy="13" r="4.600" fill="#4285f4"/></svg><em class="badge pink">A</em></span>
      <span class="app-i"><svg viewBox="0 0 26 26"><circle cx="13" cy="13" r="12.500" fill="url(#g-edge)"/><path d="M.6 14C1 6 13 5 15 12c-4-2-6 3-3 6 3 3 8 3 12 1-4 8-15 9-21 2.500-2-2-2.900-4.500-2.400-7.500z" fill="#1160b4"/><path d="M9 12c-4 5-1 12 6 13 4 0 7-3 9-6-3 2-9 2-11-1-1-3-1-4 0-6.500-2-.5-3 0-4 .5z" fill="#1a4c98"/></svg></span>
      <span class="app-i run"><svg viewBox="0 0 26 26"><circle cx="13" cy="13" r="12.500" fill="#5865f2"/><path d="M8 7.500q5-1.500 10 0 3 4 3 10-2 2-4 2l-1-1.800H10L9 19.500q-2 0-4-2 0-6 3-10z" fill="#fff"/><circle cx="10" cy="13.500" r="1.900" fill="#5865f2"/><circle cx="16" cy="13.500" r="1.900" fill="#5865f2"/></svg><em class="badge red">9+</em></span>
      <span class="app-i active"><b class="tile ai">Ai</b></span>
    </div>
    <div class="tray">
      <svg viewBox="0 0 14 10" class="tup"><path d="m1 8 6-6.500L13 8" fill="none" stroke="#e6e6e6" stroke-width="1.300"/></svg>
      <span class="lang">ESP</span>
      <svg viewBox="0 0 16 13" class="wifi"><g fill="none" stroke-width="1.400"><path d="M1 5q7-7 14 0" stroke="#8a8f96"/><path d="M3.300 7.500q4.700-4.500 9.400 0M5.500 10q2.500-2.300 5 0" stroke="#fff"/></g><circle cx="8" cy="11.500" r="1.300" fill="#fff"/></svg>
      <svg viewBox="0 0 17 14" class="spk"><path d="M1 5h3l4-3.500v11L4 9H1z" fill="none" stroke="#fff" stroke-width="1.300"/><path d="M10 5q1.500 2 0 4" fill="none" stroke="#fff" stroke-width="1.200"/><path d="M12 3q3 4 0 8M14 1.500q4 5.500 0 11" fill="none" stroke="#666b72"/></svg>
      <svg viewBox="0 0 18 12" class="bat"><rect x=".7" y=".7" width="14.600" height="10.600" rx="2.500" fill="none" stroke="#fff" stroke-width="1.300"/><rect x="2.500" y="2.500" width="9" height="7" fill="#fff"/><path d="M17 4v4" stroke="#fff" stroke-width="1.600"/></svg>
      <div class="clock"><span>13:54</span><span class="date">23/05/2022</span></div>
    </div>
  </footer>
</div>
</body>
</html>
```
FILE: styles.css
```css
* { box-sizing: border-box; }
body { margin: 0; background: #262626; color: #d2d2d2; font: 11px/14px "Noto Sans", "Open Sans", sans-serif; overflow: hidden; }
i, em { font-style: normal; }
b { font-weight: normal; }
svg { display: block; flex: none; color: #b8b8b8; }
.sprite { position: absolute; width: 0; height: 0; }
.app { width: 1600px; height: 900px; display: flex; flex-direction: column; overflow: hidden; }
span { white-space: nowrap; }
.chev { width: 10px; height: 10px; color: #cfcfcf; }
.s10 { width: 10px; height: 10px; }
.s12 { width: 12px; height: 12px; }
.s14 { width: 14px; height: 14px; }
.s16 { width: 16px; height: 16px; }
.s20 { width: 20px; height: 20px; }
.w16 { width: 16px; height: 13px; }
.w17 { width: 17px; height: 12px; }

.menubar { height: 33px; flex: none; background: #323232; border-bottom: 1px solid #262626; padding-left: 11px; display: grid; grid-template-columns: 31px 35px 16px 58px 55px 52px 44px 79px 49px 33px 59px 48px 14px 25px 640px 33px 14px 27px 187px 88px; align-items: center; padding-bottom: 2px; font-size: 12.5px; letter-spacing: -0.25px; color: #d6d6d6; }
.logo { width: 17px; height: 14px; background: #330000; border-radius: 3px; color: #ff9a00; font: bold 9px/14px "Noto Sans", sans-serif; text-align: center; }
.home { width: 20px; height: 17px; margin-top: 3px; }
.rule { width: 1px; height: 22px; background: #2a2a2a; }
.ws { width: 19px; height: 12px; }
.pnl { width: 18px; height: 14px; margin-top: 4px; }
.menubar .s20 { margin-top: 3px; }
.search { width: 177px; height: 21px; background: #262626; border: 1px solid #3d3d3d; border-radius: 3px; display: flex; align-items: center; padding: 2px 0 0 4px; font-size: 12px; color: #8f8f8f; letter-spacing: -0.55px; }
.search .chev { width: 9px; margin-right: 2px; }
.search svg { margin-top: -2px; }
.winbtns { height: 20px; width: 87px; align-self: start; border: 1px solid #3d3d3d; border-top: 0; border-radius: 0 0 4px 4px; display: grid; grid-template-columns: 1fr 1fr 1fr; }
.winbtns b { display: flex; align-items: center; justify-content: center; border-right: 1px solid #3a3a3a; padding-top: 1px; }
.winbtns b:last-child { border: 0; }
.winbtns svg { color: #8f8f8f; }
.min::before { content: ""; width: 12px; height: 3px; background: #8f8f8f; margin: 4px 3px 0 0; }
.rst { width: 16px; height: 14px; }

.controlbar { height: 35px; flex: none; background: #323232; padding-left: 15px; display: grid; grid-template-columns: 135px 46px 52px 35px 88px 119px 117px 53px 77px 35px 52px 112px 88px 22px 444px 24px 27px 29px 30px; align-items: center; letter-spacing: -0.3px; }
.nosel { color: #9a9a9a; letter-spacing: -0.5px; font-size: 11.3px; }
.dim { color: #8c8c8c; }
.combo { display: flex; height: 21px; align-items: center; }
.combo > b { width: 19px; height: 21px; background: #262626; border: 1px solid #3a3a3a; display: flex; align-items: center; justify-content: center; }
.sw { width: 20px; height: 21px; background: #fff; border: 1px solid #c4c4c4; }
.strokesw { background: #000; display: flex; align-items: center; justify-content: center; }
.strokesw::before { content: ""; width: 8px; height: 8px; background: #aaa; border: 2px solid #fff; outline: 1px solid #333; outline-offset: -2px; }
.style { background: #e2e2e2; }
.dotted { border-bottom: 1px dotted #b0b0b0; justify-self: start; line-height: 13px; }
.combo > .step { width: 17px; flex-direction: column; justify-content: space-between; background: #323232; }
.step .chev { height: 9px; }
.pt, .pct { height: 21px; line-height: 21px; background: #262626; padding-left: 4px; }
.pt { width: 47px; }
.pct { width: 53px; }
.off i { width: 94px; height: 23px; background: #686868; border: 1px solid #727272; }
.off .chev { margin-left: 5px; color: #4c4c4c; }
.brushsel span { width: 91px; height: 21px; line-height: 21px; background: #e2e2e2; color: #1c1c1c; padding-left: 8px; letter-spacing: -0.4px; }
.brushsel em { display: inline-block; width: 18px; }
.btn { height: 21px; line-height: 20px; border: 1px solid #505050; border-radius: 3px; text-align: center; color: #dadada; letter-spacing: -0.55px; font-size: 11.3px; }
.b1 { width: 108px; }
.b2 { width: 78px; }
.selsim { width: 18px; height: 17px; }
.gs { width: 14px; height: 14px; color: #5c5c5c; margin-left: 1px; }
.magnet { width: 25px; height: 25px; background: #1c1c1c; border-radius: 2px; display: flex; align-items: center; justify-content: center; }
.li { width: 12px; height: 9px; }

.work { flex: none; height: 781px; display: grid; grid-template-columns: 43px 1251px 44px 262px; }
.strip { height: 13px; background: #262626; border-bottom: 1px solid #1f1f1f; display: flex; align-items: center; }
.dbl { width: 8px; height: 5px; color: #b0b0b0; }
.grip { display: block; flex: none; width: 19px; height: 5px; background: repeating-linear-gradient(90deg, #222 0 1px, transparent 1px 3px); }

.tools { background: #323232; border-right: 2px solid #262626; border-left: 1px solid #292929; }
.tools .strip { padding-left: 6px; }
.tools .grip { margin: 3px 0 0 10px; }
.toollist { margin-top: 13px; }
.toollist span { height: 24.97px; display: flex; align-items: center; padding-left: 10px; position: relative; }
.toollist svg { width: 20px; height: 20px; }
.more::after { content: ""; position: absolute; left: 30px; bottom: 3px; border-left: 3px solid transparent; border-bottom: 3px solid #a0a0a0; }
.toollist .type { font: bold 21px/24px "Liberation Serif", serif; padding-left: 13px; color: #b8b8b8; }
.toolend { width: 42px; height: 160px; margin: 0 0 0 -1px; }

.doc { display: flex; flex-direction: column; background: #262626; min-width: 0; border-right: 1px solid #1c1c1c; }
.tabs { height: 31px; flex: none; border-bottom: 1px solid #909090; width: 1235px; }
.tab { width: 293px; height: 30px; background: #323232; display: flex; align-items: center; padding-left: 10px; font-weight: bold; font-size: 11.5px; color: #e2e2e2; }
.tab span { width: 268px; }
.tabx { width: 9px; height: 9px; }
.view { height: 734px; display: flex; }
.canvas { width: 1235px; height: 734px; background: #363636; position: relative; overflow: hidden; flex: none; }
.ab { position: absolute; background: #fff; box-shadow: 0 0 0 1px #8a8a8a; }
.blk { left: 0; top: 0; width: 65px; height: 62px; background: #000; }
.top { left: 77px; top: 0; width: 1043px; height: 62px; box-shadow: 0 0 0 1px #000; }
.topr { left: 1132px; top: 0; width: 110px; height: 62px; }
.midl { left: 0; top: 74px; width: 64px; height: 587px; }
.main { left: 76px; top: 74px; width: 1043px; height: 587px; }
.midr { left: 1132px; top: 74px; width: 110px; height: 587px; }
.botl { left: 0; top: 677px; width: 64px; height: 70px; }
.bot { left: 75px; top: 677px; width: 1044px; height: 70px; }
.botr { left: 1131px; top: 677px; width: 110px; height: 70px; }
.tri { position: absolute; width: 32px; height: 37px; }
.flip { transform: scaleX(-1); }
.p1 { left: 123px; top: 115px; }
.p2 { left: 1181px; top: 107px; }
.p3 { left: 439px; top: 306px; }
.p4 { left: 615px; top: 307px; }
.p5 { left: 438px; top: 499px; }
.p6 { left: 620.5px; top: 498px; }
.p7 { left: 134px; top: 723px; }
.p8 { left: 1182px; top: 723px; }
.art { position: absolute; color: #000; font-family: "Liberation Sans", Arial, sans-serif; font-size: 39px; line-height: 44px; }
.a1 { left: 418px; top: 115px; font-weight: bold; font-size: 39.1px; }
.a2 { left: 421.5px; top: 231px; }
.a3 { left: 478px; top: 310px; font-size: 26px; line-height: 30px; }
.a4 { left: 448px; top: 442px; }
.a5 { left: 472.5px; top: 503px; font-size: 26px; line-height: 30px; }
.vscroll { width: 16px; background: #2b2b2b; display: flex; flex-direction: column; align-items: center; justify-content: space-between; padding: 4px 0; }
.vscroll .chev { color: #757575; }
.vscroll i { width: 15px; height: 27px; background: #414141; border-radius: 7px; margin-top: 89px; }
.status { height: 16px; flex: none; background: #323232; border-top: 1px solid #555; overflow: hidden; padding-left: 5px; display: grid; grid-template-columns: 55px 25px 17px 12px 50px 23px 18px 17px 217px 16px 1fr; align-items: center; letter-spacing: -0.3px; color: #c4c4c4; }
.status > span { height: 20px; line-height: 21px; align-self: start; }
.status .dark { background: #282828; padding-left: 3px; width: 51px; }
.status .pagef { width: 42px; margin-left: 5px; }
.status .mode { text-align: center; background: #353535; border-left: 1px solid #2b2b2b; color: #a8a8a8; width: 207px; margin-left: 4px; }
.hscroll { height: 16px; background: #2b2b2b; display: flex; align-items: center; margin-left: 2px; padding: 0 20px 0 1px; }
.hscroll .chev { color: #757575; }
.hscroll i { width: 26px; height: 15px; background: #414141; border-radius: 6px; margin: 0 auto 0 453px; }

.dock { background: #323232; border-right: 1px solid #262626; border-left: 2px solid #262626; }
.dock .strip { padding-left: 26px; }
.dg { border-bottom: 1px solid #222; display: flex; flex-direction: column; align-items: center; height: 72px; padding-top: 3px; }
.dg svg { width: 19px; height: 19px; margin-top: 7px; margin-bottom: 5px; }
.dg svg ~ svg { margin-top: 6px; }
.g2b { height: 70px; }
.g1 { height: 43px; }
.g3 { height: 102px; }
.g3 svg { margin: 5px 0; }
.glyph { font-size: 18px; line-height: 28px; color: #b8b8b8; font-weight: 600; letter-spacing: -1px; }
.g3 .grip { margin-bottom: 4px; }

.panels { background: #323232; border-right: 3px solid #262626; }
.panels .strip { justify-content: flex-end; padding-right: 3px; }
.panel { display: flex; flex-direction: column; border-bottom: 2px solid #222; }
.pa { height: 241px; }
.pb { height: 238px; }
.pc { height: 289px; border-bottom: 0; }
.ptabs { height: 28px; flex: none; background: #262626; display: flex; align-items: stretch; color: #8c8c8c; font-weight: bold; line-height: 28px; letter-spacing: -0.45px; font-size: 10.8px; }
.ptabs span { padding-left: 10px; }
.ptabs .on { background: #323232; color: #f0f0f0; }
.ptabs svg { width: 11px; height: 9px; margin: 10px 4px 0 auto; color: #8a8a8a; }
.c1 { width: 48px; }
.ptabs .c2 { width: 100px; padding-left: 9px; letter-spacing: -0.7px; }
.m1 { width: 64px; }
.ptabs .m2 { width: 73px; letter-spacing: -0.7px; }
.ptabs .m3 { width: 75px; letter-spacing: -0.8px; }
.l1 { width: 47px; }
.l2 { width: 46px; }
.l3 { width: 68px; }
.listbox { margin: 5px 3px 0 5px; height: 184px; display: flex; border: 1px solid #3b3b3b; overflow: hidden; flex: none; }
.rows { width: 237px; overflow: hidden; }
.r { height: 19.75px; border-bottom: 1px solid #3c3c3c; display: grid; grid-template-columns: 43px 151px 42px; align-items: stretch; line-height: 21px; color: #dedede; letter-spacing: -0.55px; font-size: 11.4px; }
.r span { padding-left: 5px; border-right: 1px solid #3c3c3c; }
.r span:first-child { font-size: 13px; padding-left: 5px; color: #c6c6c6; }
.r svg { width: 16px; height: 13px; margin: 2px 0 0 6px; }
.sel { background: #3a5068; }
.pscroll { width: 13px; background: #292929; display: flex; flex-direction: column; align-items: center; }
.pscroll i { width: 10px; height: 131px; background: #404040; border-radius: 5px; margin-bottom: auto; }
.pscroll .chev { color: #777; margin: 1px 0 2px; flex: none; }
.pfoot { display: flex; align-items: center; flex: 1; padding-left: 13px; padding-bottom: 1px; }
.arr { width: 12px; height: 13px; }
.tr { width: 12px; height: 14px; }
.f1 .arr:nth-child(2) { margin-left: 112px; }
.f1 .arr:nth-child(3) { margin: 0 16px 0 15px; }
.pfoot .tr { margin-left: 14px; }

.swtop { display: flex; height: 42px; flex: none; padding: 6px 3px 0 5px; justify-content: space-between; }
.fs { width: 32px; height: 32px; }
.viewtog { width: 51px; height: 25px; border: 1px solid #3d3d3d; display: flex; }
.viewtog b { width: 25px; display: flex; align-items: center; justify-content: center; }
.viewtog .act { background: #1f1f1f; }
.viewtog svg { width: 16px; height: 16px; }
.swbox { margin: 1px 3px 0 5px; border: 1px solid #3a3a3a; height: 145px; flex: none; padding-left: 0.5px; }
.swgrid { display: grid; grid-template-columns: repeat(16, 13.5px); grid-auto-rows: 13.6px; gap: 1px 1.05px; }
.swgrid i { overflow: hidden; }
.swgrid svg { width: 12px; height: 12px; margin: 1px; }
.grays { margin-top: 3px; }
.hues { margin-top: 3px; }
.none { background: linear-gradient(135deg, #fff 44%, #e00 44% 56%, #fff 56%); }
.reg { background: linear-gradient(#555, #555) center / 1px 100% no-repeat, linear-gradient(#555, #555) center / 100% 1px no-repeat, radial-gradient(circle, #555 0 1px, #ddd 1px 4px, #555 4px 5px, #ddd 5px); }
.cur { background: #fff; border: 1px solid #fff; outline: 1px solid #222; outline-offset: -2px; }
.gr1 { background: linear-gradient(90deg, #fff, #000); }
.gr2 { background: linear-gradient(90deg, #fff, #0071bc); }
.gr3 { background: linear-gradient(90deg, #ff5fa0, #ffe6f0); }
.gr4 { background: radial-gradient(circle, #ffe0a0, #f7931e 60%); }
.pt1 { background: repeating-conic-gradient(#ddd 0 25%, #fff 0 50%) 0 0 / 4px 4px; }
.pt2 { background: repeating-conic-gradient(#1d5c9a 0 25%, #a8cbe6 0 40%, #1d5c9a 0 50%) 0 0 / 6px 5px; }
.pt3 { background: repeating-conic-gradient(#a9d3bc 0 25%, #e8efcf 0 45%, #7fb7c4 0 50%) 0 0 / 6px 5px; }
.f2 { padding-left: 12px; }
.f2 svg:nth-child(2) { margin-left: 12px; }
.f2 svg:nth-child(3) { margin-left: 13px; }
.f2 svg:nth-child(4) { margin-left: 31px; }
.f2 svg:nth-child(5) { margin-left: 12px; }
.f2 svg:nth-child(6) { margin: 0 15px; }

.layers { height: 234px; margin-top: 7px; }
.ly { height: 21.88px; border-bottom: 1px solid #3c3c3c; display: grid; grid-template-columns: 22px 23px 9px 22px 23px 101px 36px; align-items: center; color: #dedede; letter-spacing: -0.55px; font-size: 11.3px; }
.ly .eye { width: 14px; height: 10px; margin-left: 4px; grid-column: 1; }
.ly i { grid-column: 3; width: 4px; height: 19px; }
.ly .th { width: 19px; height: 19px; background-color: #fff; border: 1px solid #111; background-repeat: no-repeat; }
.ly u { width: 9px; height: 9px; border: 1.5px solid #c0c0c0; border-radius: 50%; margin-left: 6px; }
.gray { background: #808080; }
.cyan { background: #5ff; }
.mag { background: #f050e8; }
.blue { background: #5050f0; }
.black { background: #000; }
.org { background: #ff6a10; }
.v1 { background-image: repeating-linear-gradient(#222 0 2px, transparent 2px 4px); background-size: 4px 11px; background-position: 10px 3px; }
.v2 { background-image: repeating-linear-gradient(90deg, #888 0 2px, transparent 2px 5px); background-size: 12px 5px; background-position: 3px 6px; }
.v3 { background-image: repeating-linear-gradient(#222 0 2px, transparent 2px 4px); background-size: 7px 11px; background-position: 8px 3px; }
.v4 { background-image: linear-gradient(#111, #111), linear-gradient(#111, #111); background-size: 8px 4px, 4px 1px; background-position: 1px 7px, 13px 2px; }
.v5 { background-image: repeating-linear-gradient(#222 0 2px, transparent 2px 3px); background-size: 8px 8px; background-position: 5px 5px; }
.ly .v6 { background-image: radial-gradient(#888, #000 50%); background-size: 17px 9px; background-position: 0 4px; }
.v7 { background-image: linear-gradient(#555, #555), linear-gradient(#999, #999); background-size: 10px 1px, 2px 7px; background-position: 7px 5px, 11px 6px; }
.layers .pscroll i { height: 202px; }
.layers .sel { background: linear-gradient(225deg, #ccc 0 5px, transparent 5px), #3a5068; }
.f3 { padding-left: 6px; }
.f3 span { width: 78px; color: #a0a0a0; font-size: 11.5px; }
.f3 svg:nth-child(3) { margin-left: 15px; }
.f3 svg:nth-child(4) { margin-left: 14px; }
.f3 svg:nth-child(5) { margin: 0 13px 0 12px; }
.faded { color: #666; }

.taskbar { height: 51px; flex: none; background: linear-gradient(90deg, #17273c, #1c2430 12%, #202227 32%, #202227 70%, #1a2431 85%, #1a2230); display: grid; grid-template-columns: 54px 447px 605px 1fr; align-items: center; color: #f0f0f0; }
.weather { width: 26px; height: 20px; margin-left: 22px; }
.wtext { display: flex; flex-direction: column; gap: 3px; font-size: 12.3px; letter-spacing: -0.15px; }
.wtext .deg { letter-spacing: -0.5px; }
.wtext span + span { color: #c2c6cc; }
.apps { display: flex; gap: 3.85px; padding-left: 3px; padding-top: 1px; }
.app-i { width: 42px; height: 42px; display: flex; align-items: center; justify-content: center; position: relative; border-radius: 4px; }
.app-i svg { width: 25px; height: 25px; }
.active { background: #2e3135; border: 1px solid #393c40; }
.run::after, .active::after { content: ""; position: absolute; bottom: 1px; left: 18px; width: 6px; height: 3px; border-radius: 2px; background: #9a9a9a; }
.active::after { left: 12px; width: 16px; background: #777; bottom: 0; }
.tile { width: 25px; height: 25px; border-radius: 3px; text-align: center; font: bold 14px/24px "Noto Sans", sans-serif; letter-spacing: -0.5px; }
.xd { background: #470137; color: #ff61f6; }
.ai { background: #330000; color: #ff9a00; width: 23px; height: 23px; line-height: 22px; font-size: 13px; }
.lt { background: #2ba6d4; color: #fff; border-radius: 0; font-size: 20px; line-height: 24px; text-shadow: -2px 1px 0 #0b4a6e; }
.badge { position: absolute; left: 22px; top: 3px; width: 17px; height: 17px; border-radius: 50%; font-size: 9.5px; line-height: 17px; text-align: center; color: #fff; letter-spacing: 0; }
.pink { background: #c2185b; color: #f4c6d8; }
.red { background: #f0544f; }
.tray { display: flex; align-items: center; padding-left: 253px; }
.tup { width: 14px; height: 10px; }
.lang { margin-left: 19px; width: 42px; font-size: 12.3px; letter-spacing: -0.3px; padding-top: 2px; }
.wifi { width: 16px; height: 13px; }
.spk { width: 17px; height: 14px; margin-left: 7px; }
.bat { width: 18px; height: 12px; margin-left: 8px; }
.clock { margin-left: auto; margin-right: 19px; display: flex; flex-direction: column; align-items: flex-end; gap: 3px; font-size: 12.3px; letter-spacing: -0.15px; }
.clock span:first-child { letter-spacing: -0.4px; padding-top: 1px; }
```
